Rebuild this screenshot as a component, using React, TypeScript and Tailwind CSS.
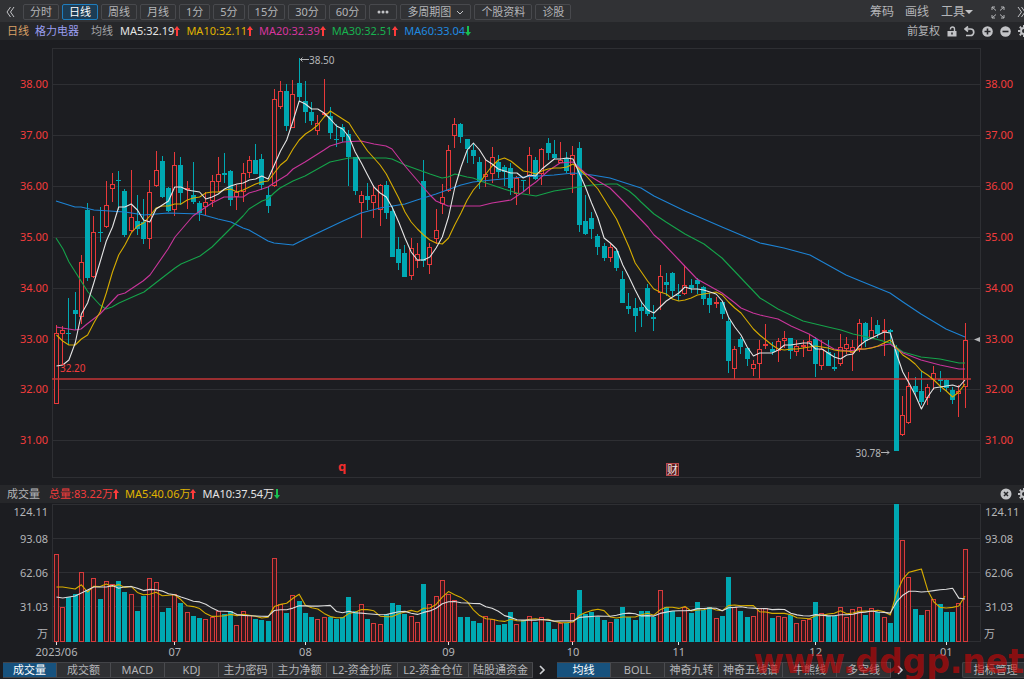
import type { ReactNode } from "react";
import { clsx } from "clsx";

type Candle = [high: number, top: number, bottom: number, low: number, volume: number, up: 0 | 1];
type Point = [x: number, y: number];

const RED = "#f23c3c";
const CANDLE_RED = "#e8393a";
const TEAL = "#00a8b2";
const GRID = "#2e2f33";
const BG = "#1c1d21";

const FIRST_X = 56.5;
const STEP = 908.5 / 146;
const xAt = (i: number) => FIRST_X + i * STEP;

// high, body top, body bottom, low, volume top, rising
const candles: Candle[] = [
  [325, 333, 404, 404, 554, 1], [326, 330, 334, 364, 607, 1], [298, 333, 334, 345, 597, 0], [292, 310, 314, 330, 594, 0],
  [255, 262, 317, 324, 572, 1], [203, 210, 278, 281, 590, 0], [216, 232, 277, 278, 578, 1], [207, 232, 233, 242, 599, 0],
  [181, 205, 227, 228, 581, 1], [173, 184, 189, 202, 584, 1], [171, 180, 181, 210, 581, 0], [189, 191, 235, 237, 592, 0],
  [170, 217, 231, 232, 594, 1], [195, 221, 229, 235, 611, 0], [199, 222, 239, 244, 596, 0], [180, 192, 239, 249, 578, 1],
  [151, 170, 186, 187, 582, 1], [156, 161, 197, 198, 612, 0], [187, 188, 211, 212, 608, 0], [152, 165, 210, 216, 594, 1],
  [157, 165, 193, 205, 603, 0], [181, 188, 190, 209, 612, 1], [162, 195, 202, 204, 616, 0], [201, 203, 213, 221, 618, 0],
  [192, 202, 207, 215, 619, 1], [175, 181, 201, 207, 617, 1], [157, 174, 182, 192, 611, 1], [153, 173, 175, 183, 614, 0],
  [170, 171, 200, 206, 611, 0], [185, 192, 197, 210, 625, 1], [163, 173, 192, 202, 611, 1], [156, 160, 173, 178, 615, 1],
  [144, 160, 174, 174, 619, 0], [154, 159, 185, 190, 620, 0], [186, 195, 206, 213, 621, 0], [89, 99, 186, 187, 558, 1],
  [81, 91, 107, 109, 604, 1], [84, 91, 126, 131, 613, 0], [80, 94, 128, 128, 595, 1], [58, 83, 97, 102, 601, 0],
  [81, 101, 112, 123, 613, 0], [102, 112, 121, 125, 617, 0], [115, 123, 131, 135, 619, 1], [79, 113, 115, 116, 617, 1],
  [107, 116, 133, 139, 617, 0], [124, 139, 140, 147, 619, 0], [124, 127, 137, 142, 617, 0], [130, 134, 157, 186, 597, 0],
  [157, 157, 191, 195, 611, 0], [191, 195, 203, 238, 604, 1], [183, 196, 200, 210, 619, 0], [185, 195, 203, 218, 623, 1],
  [184, 185, 210, 226, 624, 1], [181, 185, 213, 219, 614, 0], [206, 211, 257, 257, 603, 0], [237, 249, 263, 270, 605, 0],
  [245, 253, 277, 277, 614, 0], [238, 248, 276, 280, 616, 1], [243, 254, 261, 268, 622, 1], [160, 181, 261, 267, 584, 0],
  [243, 247, 265, 274, 604, 1], [209, 230, 239, 244, 596, 1], [184, 197, 204, 214, 580, 1], [145, 150, 191, 192, 594, 1],
  [118, 124, 136, 148, 600, 1], [123, 124, 137, 143, 617, 0], [139, 139, 149, 163, 617, 0], [143, 150, 156, 164, 621, 0],
  [157, 162, 182, 189, 623, 0], [159, 174, 177, 187, 616, 1], [147, 157, 174, 183, 619, 1], [155, 162, 172, 178, 625, 0],
  [165, 167, 172, 186, 624, 0], [163, 168, 188, 195, 612, 0], [176, 178, 194, 205, 624, 1], [180, 180, 181, 192, 620, 0],
  [147, 155, 176, 194, 616, 1], [157, 160, 179, 180, 622, 0], [148, 149, 174, 185, 617, 1], [138, 143, 153, 160, 622, 0],
  [140, 154, 158, 159, 629, 0], [142, 160, 163, 163, 623, 1], [152, 158, 171, 173, 623, 0], [146, 155, 175, 193, 613, 1],
  [142, 148, 225, 232, 590, 0], [195, 221, 234, 235, 614, 0], [212, 218, 229, 239, 612, 0], [234, 236, 247, 255, 617, 0],
  [243, 246, 258, 261, 620, 0], [243, 247, 258, 262, 622, 1], [249, 251, 268, 271, 619, 0], [271, 279, 303, 303, 607, 0],
  [293, 306, 309, 314, 617, 0], [298, 308, 316, 332, 620, 0], [301, 307, 311, 327, 611, 0], [284, 288, 314, 316, 611, 0],
  [305, 317, 319, 331, 617, 0], [265, 276, 293, 310, 590, 1], [273, 282, 285, 296, 607, 0], [272, 273, 291, 296, 611, 0],
  [284, 295, 296, 301, 617, 0], [265, 285, 294, 295, 607, 1], [279, 285, 288, 293, 613, 0], [278, 280, 284, 294, 602, 0],
  [286, 287, 299, 305, 610, 0], [293, 298, 305, 313, 607, 0], [297, 302, 304, 308, 618, 1], [301, 302, 314, 319, 616, 0],
  [316, 321, 361, 373, 577, 0], [346, 349, 369, 379, 607, 1], [337, 339, 347, 354, 611, 0], [347, 348, 359, 366, 617, 0],
  [360, 364, 369, 376, 616, 1], [340, 349, 364, 379, 608, 1], [324, 344, 345, 349, 608, 1], [342, 349, 352, 355, 618, 0],
  [338, 341, 351, 362, 616, 1], [331, 338, 341, 348, 617, 1], [338, 338, 351, 359, 615, 0], [340, 346, 352, 356, 623, 1],
  [340, 345, 346, 357, 620, 1], [334, 341, 351, 351, 619, 1], [337, 339, 364, 377, 602, 0], [340, 349, 366, 370, 613, 1],
  [340, 352, 366, 366, 616, 0], [353, 367, 369, 371, 616, 0], [334, 347, 364, 366, 607, 1], [337, 344, 349, 354, 617, 1],
  [340, 347, 353, 371, 609, 1], [319, 323, 349, 352, 607, 1], [322, 323, 341, 347, 615, 0], [317, 330, 338, 338, 608, 1],
  [320, 325, 334, 338, 612, 0], [319, 330, 332, 356, 617, 1], [329, 330, 332, 343, 623, 0], [345, 349, 451, 451, 504, 0],
  [396, 415, 435, 436, 540, 1], [372, 386, 423, 424, 577, 1], [377, 386, 392, 396, 609, 0], [371, 391, 402, 405, 615, 0],
  [384, 387, 398, 405, 610, 1], [366, 373, 380, 390, 599, 1], [371, 379, 381, 392, 604, 0], [379, 380, 388, 391, 612, 0],
  [387, 390, 400, 404, 612, 0], [385, 391, 394, 417, 603, 1], [323, 340, 387, 408, 549, 1],
];

const ma5 = [
  366, 365, 360, 343, 314, 303, 283, 262, 241, 227, 207, 207, 204, 210, 220, 222, 209, 205, 201, 187, 187, 190, 191, 192, 199,
  197, 194, 189, 186, 184, 183, 180, 179, 176, 179, 165, 151, 140, 121, 101, 104, 109, 109, 113, 119, 126, 129, 137, 152, 163,
  175, 187, 193, 197, 208, 222, 238, 252, 260, 260, 257, 248, 237, 217, 188, 167, 150, 143, 150, 160, 164, 169, 171, 173, 173,
  178, 175, 176, 169, 164, 159, 159, 158, 159, 173, 187, 203, 218, 238, 243, 249, 265, 277, 290, 302, 310, 313, 307, 301, 297,
  293, 287, 289, 289, 290, 292, 294, 301, 317, 327, 335, 347, 356, 353, 353, 353, 350, 345, 345, 344, 343, 343, 349, 349, 353,
  357, 359, 355, 354, 346, 341, 338, 335, 332, 333, 354, 372, 383, 395, 409, 397, 388, 387, 386, 385, 387, 380,
];

const ma10 = [
  335, 341, 345, 345, 339, 335, 323, 312, 293, 272, 255, 245, 233, 226, 223, 216, 208, 206, 206, 204, 204, 200, 198, 197, 193,
  192, 192, 190, 189, 192, 190, 187, 184, 182, 181, 173, 165, 160, 149, 140, 134, 130, 125, 117, 111, 115, 119, 123, 133, 142,
  151, 158, 165, 174, 186, 198, 212, 222, 229, 235, 240, 243, 244, 238, 225, 213, 200, 190, 183, 174, 166, 160, 158, 161, 166,
  171, 172, 174, 171, 169, 168, 168, 167, 164, 169, 175, 182, 189, 199, 209, 219, 233, 247, 263, 272, 281, 289, 292, 294, 299,
  301, 300, 298, 295, 294, 293, 292, 295, 302, 308, 313, 321, 329, 335, 340, 345, 349, 350, 349, 349, 348, 347, 346, 347, 348,
  350, 351, 351, 352, 349, 349, 348, 346, 343, 340, 348, 355, 359, 364, 371, 375, 380, 386, 391, 397, 392, 384,
];

const ma20: Point[] = [
  [56, 327], [75, 330], [81, 329], [87, 324], [100, 314], [118, 295], [125, 293], [143, 281], [150, 275], [168, 249], [175, 237],
  [187, 223], [193, 216], [200, 211], [212, 203], [224, 197], [243, 197], [249, 193], [256, 191], [268, 187], [274, 183],
  [287, 175], [293, 169], [305, 162], [324, 150], [330, 146], [343, 142], [361, 141], [374, 144], [386, 146], [392, 149],
  [405, 166], [417, 180], [430, 195], [436, 201], [448, 206], [480, 206], [492, 203], [511, 200], [523, 192], [529, 187],
  [536, 182], [548, 171], [560, 163], [573, 162], [585, 173], [598, 181], [610, 188], [623, 201], [648, 227], [654, 235],
  [660, 240], [679, 260], [697, 279], [722, 293], [735, 303], [741, 308], [753, 313], [760, 315], [778, 319], [791, 326],
  [809, 334], [822, 342], [834, 349], [847, 351], [865, 349], [884, 345], [890, 344], [903, 353], [921, 360], [940, 365],
  [959, 369], [965, 369],
];

const ma30: Point[] = [
  [56, 238], [63, 249], [69, 262], [88, 292], [100, 305], [106, 309], [112, 307], [119, 303], [137, 295], [144, 292], [162, 278],
  [175, 268], [181, 264], [200, 256], [212, 247], [224, 235], [243, 216], [249, 209], [262, 201], [268, 199], [274, 193],
  [280, 188], [293, 181], [305, 176], [330, 162], [349, 158], [386, 158], [392, 159], [405, 165], [430, 174], [442, 178],
  [448, 177], [455, 174], [467, 177], [473, 178], [486, 183], [504, 189], [517, 193], [536, 196], [554, 191], [567, 189],
  [579, 187], [592, 185], [610, 184], [617, 184], [629, 191], [635, 196], [641, 202], [654, 214], [666, 222], [685, 234],
  [704, 244], [722, 258], [741, 278], [760, 298], [778, 309], [803, 321], [828, 327], [841, 330], [853, 334], [872, 338],
  [890, 343], [903, 352], [921, 357], [940, 359], [959, 363], [965, 363],
];

const ma60: Point[] = [
  [56, 201], [75, 207], [81, 207], [94, 210], [125, 212], [144, 215], [168, 213], [200, 214], [218, 219], [231, 222], [243, 228],
  [249, 230], [268, 241], [274, 243], [293, 245], [305, 239], [324, 230], [343, 221], [361, 213], [380, 208], [405, 204],
  [417, 200], [436, 194], [461, 185], [473, 182], [492, 180], [523, 177], [554, 175], [573, 173], [592, 175], [610, 178],
  [641, 188], [654, 196], [685, 211], [722, 227], [760, 243], [784, 248], [810, 255], [828, 265], [846, 275], [858, 280],
  [890, 293], [903, 302], [921, 314], [946, 329], [965, 337],
];

const volumes = candles.map((c) => c[4]);

function average(values: number[], size: number, head: number[]) {
  return values.map((_, i) => {
    if (i < head.length) return head[i];
    const part = values.slice(i - size + 1, i + 1);
    return part.reduce((a, b) => a + b, 0) / size;
  });
}

const volMa5 = average(volumes, 5, [587, 587, 588, 589]);
const volMa10 = average(volumes, 10, [597, 598, 597, 596, 593, 590, 587, 587, 587]);

const byIndex = (ys: number[]): Point[] => ys.map((y, i) => [xAt(i), y]);

function Line({ points, color }: { points: Point[]; color: string }) {
  return (
    <polyline
      points={points.map(([x, y]) => `${x.toFixed(1)},${y.toFixed(1)}`).join(" ")}
      fill="none"
      stroke={color}
      strokeWidth="1.1"
      strokeLinejoin="round"
    />
  );
}

const prices = ["38.00", "37.00", "36.00", "35.00", "34.00", "33.00", "32.00", "31.00"];

function PriceChart() {
  return (
    <svg viewBox="0 40 1024 445" className="block h-auto w-full text-[11px]" role="img" aria-label="日线">
      <rect x="52.5" y="48.5" width="928" height="429" fill="none" stroke={GRID} />
      {prices.map((p, i) => {
        const y = Math.round(84 + i * 50.9);
        return (
          <g key={p}>
            <line x1="52" x2="980" y1={y + 0.5} y2={y + 0.5} stroke={GRID} />
            <text x="48" y={y + 4} textAnchor="end" fill={RED}>{p}</text>
            <text x="985" y={y + 4} fill={RED}>{p}</text>
          </g>
        );
      })}
      {candles.map(([high, top, bottom, low, , up], i) => {
        const x = Math.floor(xAt(i));
        const color = up ? CANDLE_RED : TEAL;
        return (
          <g key={i}>
            <rect x={x} y={high} width="1" height={low - high} fill={color} />
            {up ? (
              <rect x={x - 1.5} y={top + 0.5} width="4" height={Math.max(bottom - top - 1, 1)} fill={BG} stroke={color} />
            ) : (
              <rect x={x - 2} y={top} width="5" height={Math.max(bottom - top, 1)} fill={color} />
            )}
          </g>
        );
      })}
      <line x1="52" x2="971" y1="379" y2="379" stroke="#c53536" strokeWidth="1.3" />
      <Line points={ma60} color="#1d83d4" />
      <Line points={ma30} color="#15a34a" />
      <Line points={ma20} color="#c9359b" />
      <Line points={byIndex(ma10)} color="#d6ac00" />
      <Line points={byIndex(ma5)} color="#e4e4e4" />
      <text x="60" y="372" fontSize="10" fill={RED}>32.20</text>
      <g fill="none" stroke="#b4b5b8">
        <path d="M300 59.5h9M302.500 57.500l-2 2 2 2" />
        <path d="M881 452.500h8M887 450.500l2 2-2 2" />
      </g>
      <text x="309" y="64" fontSize="10" fill="#b4b5b8">38.50</text>
      <text x="881" y="457" fontSize="10" textAnchor="end" fill="#b4b5b8">30.78</text>
      <path d="M974 339.500l6-2.500v5z" fill="#b4b5b8" />
      <text x="338" y="471" fontSize="13" fontWeight="700" fill="#f02d2d">q</text>
      <rect x="666.5" y="463.5" width="12" height="12" fill="#5c1c20" stroke="#b8484b" />
      <text x="667" y="474" fontSize="11" fill="#f3e4e4">财</text>
    </svg>
  );
}

const levels: [string, number, number][] = [
  ["124.11", 504, 516],
  ["93.08", 538, 543],
  ["62.06", 572, 577],
  ["31.03", 606, 611],
];

const months: [string, number][] = [
  ["2023/06", 0], ["07", 19], ["08", 40], ["09", 63], ["10", 83], ["11", 100], ["12", 122], ["01", 143],
];

function VolumeChart() {
  return (
    <svg viewBox="0 503 1024 158" className="block h-auto w-full text-[11px]" role="img" aria-label="成交量">
      <rect x="52.5" y="504.5" width="928" height="137" fill="none" stroke={GRID} />
      {levels.map(([label, y, baseline]) => (
        <g key={label} fill="#b4b5b8">
          <line x1="52" x2="980" y1={y + 0.5} y2={y + 0.5} stroke={GRID} />
          <text x="48" y={baseline} textAnchor="end">{label}</text>
          <text x="985" y={baseline}>{label}</text>
        </g>
      ))}
      <text x="48" y="638" textAnchor="end" fill="#b4b5b8">万</text>
      <text x="984" y="638" fill="#b4b5b8">万</text>
      {candles.map(([, , , , top, up], i) => {
        const x = Math.floor(xAt(i));
        return up ? (
          <rect key={i} x={x - 1.5} y={top + 0.5} width="4" height={641 - top} fill="#35191d" stroke="#d83a3b" />
        ) : (
          <rect key={i} x={x - 2} y={top} width="5" height={642 - top} fill={TEAL} />
        );
      })}
      <Line points={byIndex(volMa5)} color="#d6ac00" />
      <Line points={byIndex(volMa10)} color="#dcdcdc" />
      {months.map(([label, i]) => (
        <g key={label}>
          <rect x={Math.floor(xAt(i))} y="642" width="1" height="3" fill="#e4e4e4" />
          <text x={xAt(i)} y="656" textAnchor="middle" fill="#b4b5b8">{label}</text>
        </g>
      ))}
    </svg>
  );
}

function Arrow({ down = false }: { down?: boolean }) {
  return (
    <svg viewBox="0 0 6 10" className={clsx("h-[10px] w-[6px]", down && "rotate-180")} aria-hidden="true">
      <path d="M3 0l3 4H4v6H2V4H0z" fill={down ? "#18c04f" : "#ff3b3b"} />
    </svg>
  );
}

function Stat({ className, down, children }: { className: string; down?: boolean; children: ReactNode }) {
  return (
    <span className={clsx("flex items-center", className)}>
      {children}
      <Arrow down={down} />
    </span>
  );
}

function Gear() {
  return (
    <svg viewBox="0 0 12 12" className="size-3 shrink-0" aria-hidden="true">
      <g stroke="#c2c3c6" fill="none">
        <circle cx="6" cy="6" r="3" strokeWidth="2" />
        <path d="M6 0v2M6 10v2M0 6h2M10 6h2M1.800 1.800l1.400 1.400M8.800 8.800l1.400 1.400M10.200 1.800L8.800 3.200M3.200 8.800l-1.400 1.400" strokeWidth="2" />
      </g>
    </svg>
  );
}

const periods = ["分时", "日线", "周线", "月线", "1分", "5分", "15分", "30分", "60分"];
const periodButton = "flex h-4 shrink-0 items-center justify-center rounded-[2px] border";

function PeriodBar() {
  return (
    <header className="flex h-[22px] items-center overflow-hidden bg-[#313235] pt-[2px] text-[#b4b5b8]">
      <button aria-label="收起" className="mr-2 ml-[6px] w-[9px]">
        <svg viewBox="0 0 9 12" className="h-3 w-[9px]" fill="none" stroke="#c2c3c6">
          <path d="M4.500 1L1 6l3.500 5M8 1L4.500 6 8 11" />
        </svg>
      </button>
      <div className="flex gap-[3px]">
        {periods.map((p) => (
          <button
            key={p}
            className={clsx(periodButton, "px-[6px]", p === "日线" ? "border-[#1f7dbd] bg-[#1d3c54] text-white" : "border-[#48494d]")}
          >
            {p}
          </button>
        ))}
        <button aria-label="更多" className={clsx(periodButton, "border-[#48494d] px-[7px]")}>
          <svg viewBox="0 0 12 4" className="h-1 w-3" fill="#c2c3c6">
            <circle cx="2" cy="2" r="1.500" />
            <circle cx="6" cy="2" r="1.500" />
            <circle cx="10" cy="2" r="1.500" />
          </svg>
        </button>
        <button className={clsx(periodButton, "gap-[5px] border-[#48494d] px-[6px]")}>
          多周期图
          <svg viewBox="0 0 8 5" className="h-[5px] w-2" fill="none" stroke="#c2c3c6">
            <path d="M1 1l3 3 3-3" />
          </svg>
        </button>
        <button className={clsx(periodButton, "border-[#48494d] px-[6px]")}>个股资料</button>
        <button className={clsx(periodButton, "border-[#48494d] px-[6px]")}>诊股</button>
      </div>
      <div className="ml-auto flex shrink-0 items-center text-xs">
        <button className="mr-[11px]">筹码</button>
        <button className="mr-3">画线</button>
        <button className="mr-[18px] flex items-center">
          工具
          <svg viewBox="0 0 8 4" className="h-1 w-2" fill="#c2c3c6">
            <path d="M0 0h8L4 4z" />
          </svg>
        </button>
        <button aria-label="全屏" className="mr-3">
          <svg viewBox="0 0 14 13" className="h-[13px] w-[14px]" fill="none" stroke="#b4b5b8">
            <path d="M1 4V1h3M1 1l4 3.500M10 1h3v3M13 1L9 4.500M1 9v3h3M1 12l4-3.500M10 12h3V9M13 12L9 8.500" />
          </svg>
        </button>
        <button aria-label="展开" className="w-[7px] overflow-hidden">
          <svg viewBox="0 0 9 12" className="h-3 w-[9px]" fill="none" stroke="#c2c3c6">
            <path d="M1 1l3.500 5L1 11M4.500 1L8 6l-3.500 5" />
          </svg>
        </button>
      </div>
    </header>
  );
}

function AverageBar() {
  return (
    <div className="flex h-[18px] items-center overflow-hidden bg-[#26272a] pl-[7px]">
      <span className="text-[#d9a066]">日线</span>
      <span className="ml-[6px] text-[#9a9df0]">格力电器</span>
      <span className="mr-[7px] ml-3 text-[#a4a5a8]">均线</span>
      <div className="flex gap-[6px]">
        <Stat className="text-[#e4e4e4]">MA5:32.19</Stat>
        <Stat className="text-[#e0b400]">MA10:32.11</Stat>
        <Stat className="text-[#d8359f]">MA20:32.39</Stat>
        <Stat className="text-[#18b24f]">MA30:32.51</Stat>
        <Stat className="text-[#1f8ae0]" down>MA60:33.04</Stat>
      </div>
      <div className="-mr-[6px] ml-auto flex shrink-0 items-center gap-[7px] text-[#b4b5b8]">
        <button>前复权</button>
        <button aria-label="锁定">
          <svg viewBox="0 0 10 11" className="h-[11px] w-[10px]" fill="none" stroke="#c2c3c6">
            <path d="M3.500 3.500V3a2 2 0 0 1 4 0v2" strokeWidth="1.400" />
            <path d="M0.500 5h9v5.500h-9z" fill="#c2c3c6" stroke="none" />
            <path d="M5 6.500v2" stroke="#26272a" strokeWidth="1.500" />
          </svg>
        </button>
        <button aria-label="撤销">
          <svg viewBox="0 0 11 11" className="size-[11px]" fill="none" stroke="#c2c3c6" strokeWidth="1.700">
            <path d="M4 0.500L1 3l3 2.500M1 3h5.500a3.200 3.200 0 0 1 0 6.500H2" />
          </svg>
        </button>
        <button aria-label="放大">
          <svg viewBox="0 0 11 11" className="size-[11px]">
            <circle cx="5.500" cy="5.500" r="5.300" fill="#c2c3c6" />
            <path d="M5.500 2.500v6M2.500 5.500h6" stroke="#26272a" strokeWidth="1.600" />
          </svg>
        </button>
        <button aria-label="缩小">
          <svg viewBox="0 0 11 11" className="size-[11px]">
            <circle cx="5.500" cy="5.500" r="5.300" fill="#c2c3c6" />
            <path d="M2.500 5.500h6" stroke="#26272a" strokeWidth="1.600" />
          </svg>
        </button>
        <button aria-label="设置"><Gear /></button>
      </div>
    </div>
  );
}

function VolumeBar() {
  return (
    <div className="flex h-[18px] items-center overflow-hidden bg-[#26272a] pl-[7px]">
      <span className="mr-[9px] text-[#b4b5b8]">成交量</span>
      <div className="flex gap-[6px]">
        <Stat className="text-[#f23c3c]">总量:83.22万</Stat>
        <Stat className="text-[#e0b400]">MA5:40.06万</Stat>
        <Stat className="text-[#e4e4e4]" down>MA10:37.54万</Stat>
      </div>
      <div className="-mr-[6px] ml-auto flex shrink-0 items-center gap-[6px]">
        <button aria-label="关闭">
          <svg viewBox="0 0 12 12" className="size-3">
            <circle cx="6" cy="6" r="5.500" fill="#c2c3c6" />
            <path d="M4 4l4 4M8 4L4 8" stroke="#26272a" strokeWidth="1.500" />
          </svg>
        </button>
        <button aria-label="设置"><Gear /></button>
      </div>
    </div>
  );
}

const volumeTabs = ["成交量", "成交额", "MACD", "KDJ", "主力密码", "主力净额", "L2-资金抄底", "L2-资金仓位", "陆股通资金"];
const priceTabs = ["均线", "BOLL", "神奇九转", "神奇五线谱", "牛熊线", "多空线"];

function Tabs({ items }: { items: string[] }) {
  return (
    <div className="flex shrink-0 border-y border-[#434448]">
      {items.map((t, i) => (
        <button
          key={t}
          className={clsx(
            "h-[14px] border-r border-[#4a4b4f] px-1 leading-[14px]",
            t.startsWith("L2") ? "min-w-[71px]" : "min-w-[54px]",
            i === 0 ? "bg-[#17527e] text-white" : "bg-[#2f3033] text-[#b4b5b8]",
          )}
        >
          {t}
        </button>
      ))}
    </div>
  );
}

function More() {
  return (
    <button aria-label="更多指标" className="flex shrink-0 items-center px-[6px]">
      <svg viewBox="0 0 7 10" className="h-[10px] w-[7px]" fill="none" stroke="#d0d1d4" strokeWidth="1.600">
        <path d="M1 1l4 4-4 4" />
      </svg>
    </button>
  );
}

export default function App() {
  return (
    <div className="relative w-full overflow-hidden bg-[#1c1d21] pb-px font-['Noto_Sans','Noto_Sans_CJK_SC',sans-serif] text-[11px] leading-[14px] whitespace-nowrap">
      <PeriodBar />
      <AverageBar />
      <PriceChart />
      <VolumeBar />
      <VolumeChart />
      <footer className="flex items-center pt-px pl-[3px]">
        <Tabs items={volumeTabs} />
        <More />
        <div className="ml-[5px]">
          <Tabs items={priceTabs} />
        </div>
        <More />
        <button className="ml-auto h-4 w-[62px] shrink-0 rounded-l-[2px] border border-r-0 border-[#434448] bg-[#2f3033] pl-1 leading-[14px] text-[#b4b5b8]">
          指标管理
        </button>
      </footer>
      <div className="pointer-events-none absolute right-0 bottom-0 font-['DejaVu_Sans',sans-serif] text-[33px] leading-[34px] font-bold text-[#c80808]/65">
        www.ddgp.net
      </div>
    </div>
  );
}
